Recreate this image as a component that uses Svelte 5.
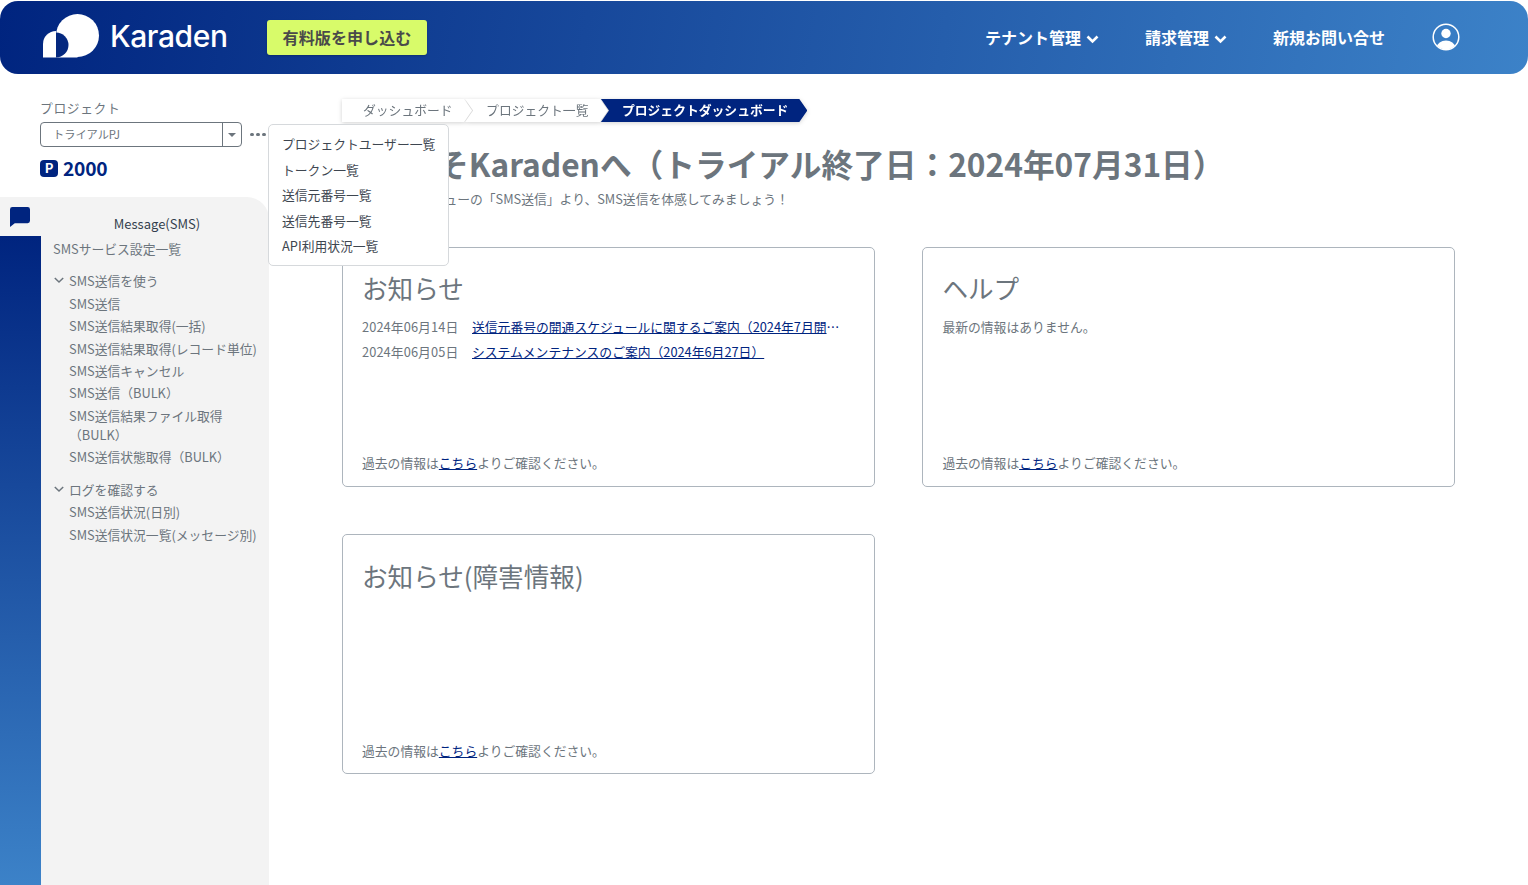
<script>
  const menu = ['プロジェクトユーザー一覧','トークン一覧','送信元番号一覧','送信先番号一覧','API利用状況一覧'];
  const useItems = ['SMS送信','SMS送信結果取得(一括)','SMS送信結果取得(レコード単位)','SMS送信キャンセル','SMS送信（BULK）','SMS送信結果ファイル取得（BULK）','SMS送信状態取得（BULK）'];
  const logItems = ['SMS送信状況(日別)','SMS送信状況一覧(メッセージ別)'];
  const crumbs = ['ダッシュボード','プロジェクト一覧'];
  const news = [
    {d:'2024年06月14日', t:'送信元番号の開通スケジュールに関するご案内（2024年7月開通分のお知らせ）'},
    {d:'2024年06月05日', t:'システムメンテナンスのご案内（2024年6月27日）'}
  ];
</script>

<div class="page">
  <header class="top">
    <div class="logo">
      <svg width="58" height="44" viewBox="0 0 58 44"><circle cx="34.500" cy="21.500" r="21.500" fill="#fff"/><path d="M13 21.500H34.500V43.500H13z" fill="#fff"/><path d="M13 18.500A12.500 12.500 0 0 1 13 43.500z" fill="#04287f"/><path d="M0 43.500V30A13 13 0 0 1 13 17V43.500z" fill="#fff"/></svg>
      <span class="brand">Karaden</span>
    </div>
    <button class="trial"><span>有料版を申し込む</span></button>
    <nav class="nav">
      <span class="nav-item w1">テナント管理<svg class="chev" width="13" height="9" viewBox="0 0 13 9"><path d="M1.500 1.500l5 5 5-5" fill="none" stroke="#fff" stroke-width="2.600"/></svg></span>
      <span class="nav-item w2">請求管理<svg class="chev" width="13" height="9" viewBox="0 0 13 9"><path d="M1.500 1.500l5 5 5-5" fill="none" stroke="#fff" stroke-width="2.600"/></svg></span>
      <span class="nav-item w3">新規お問い合せ</span>
      <svg class="user" width="28" height="28" viewBox="0 0 28 28"><defs><clipPath id="uc"><circle cx="14" cy="14" r="12.500"/></clipPath></defs><circle cx="14" cy="14" r="12.800" fill="none" stroke="#fff" stroke-width="1.500"/><circle cx="14" cy="10.500" r="4.700" fill="#fff"/><ellipse cx="14" cy="24" rx="9" ry="6.500" fill="#fff" clip-path="url(#uc)"/></svg>
    </nav>
  </header>

  <div class="body">
    <aside class="side">
      <div class="project">
        <div class="proj-label">プロジェクト</div>
        <div class="proj-row">
          <div class="select"><span class="sel-text">トライアルPJ</span><span class="sel-btn"><i></i></span></div>
          <span class="dots"><b></b><b></b><b></b></span>
        </div>
        <div class="points"><span class="p">P</span><span>2000</span></div>
      </div>
      <div class="panel">
        <div class="rail">
          <div class="rail-tab"><svg width="20" height="20" viewBox="0 0 21 21"><path d="M2.500 0h16A2.500 2.500 0 0 1 21 2.500v12a2.500 2.500 0 0 1-2.500 2.500H5L0 21V2.500A2.500 2.500 0 0 1 2.500 0z" fill="#00247f"/></svg></div>
          <div class="rail-fill"></div>
        </div>
        <div class="tree">
          <div class="tree-title">Message(SMS)</div>
          <div class="item top-item">SMSサービス設定一覧</div>
          <div class="group"><svg width="10" height="7" viewBox="0 0 10 7"><path d="M.8 1l4.200 4 4.200-4" fill="none" stroke="#6c757d" stroke-width="1.500"/></svg>SMS送信を使う</div>
          {#each useItems as it}<div class="item sub">{it}</div>{/each}
          <div class="group g2"><svg width="10" height="7" viewBox="0 0 10 7"><path d="M.8 1l4.200 4 4.200-4" fill="none" stroke="#6c757d" stroke-width="1.500"/></svg>ログを確認する</div>
          {#each logItems as it}<div class="item sub">{it}</div>{/each}
        </div>
      </div>
      <div class="popover">
        {#each menu as m}<div class="pop-item">{m}</div>{/each}
      </div>
    </aside>

    <main class="main">
      <div class="crumbs">
        {#each crumbs as c, i}
          <span class="crumb" class:first={i === 0}>{c}</span>
        {/each}
        <span class="crumb active">プロジェクトダッシュボード</span>
      </div>
      <h1>ようこそKaradenへ（トライアル終了日：2024年07月31日）</h1>
      <p class="lead">画面の左側のメニューの「SMS送信」より、SMS送信を体感してみましょう！</p>

      <div class="cards">
        <section class="card">
          <h2>お知らせ</h2>
          <div class="list">
            {#each news as n}
              <div class="row"><span class="date">{n.d}</span><a href="#a">{n.t}</a></div>
            {/each}
          </div>
          <p class="foot">過去の情報は<a href="#b">こちら</a>よりご確認ください。</p>
        </section>
        <section class="card">
          <h2>ヘルプ</h2>
          <div class="list"><div class="empty">最新の情報はありません。</div></div>
          <p class="foot">過去の情報は<a href="#c">こちら</a>よりご確認ください。</p>
        </section>
        <section class="card">
          <h2 class="low">お知らせ(障害情報)</h2>
          <div class="list"></div>
          <p class="foot">過去の情報は<a href="#d">こちら</a>よりご確認ください。</p>
        </section>
      </div>
    </main>
  </div>
</div>

<style>
  :global(body) { margin: 0; background: #fff; overflow: hidden; }
  .page {
    width: 1528px; height: 885px; overflow: hidden;
    font-family: "Noto Sans CJK JP", "Noto Sans", sans-serif;
    color: #6c757d; font-size: 12.800px; padding-top: 1px; box-sizing: border-box;
  }
  .top {
    height: 73px; border-radius: 18px;
    background: linear-gradient(100deg, #00247f 0%, #3c82c8 100%);
    display: flex; align-items: center; padding-left: 43px; box-sizing: border-box;
  }
  .logo { display: flex; align-items: center; width: 224px; margin-bottom: 4px; }
  .brand { font-family: "Inter", sans-serif; font-weight: 500; font-size: 30px; color: #fff; margin-left: 9px; line-height: 1; letter-spacing: -.4px; }
  .trial {
    width: 160px; height: 35px; border: 0; border-radius: 3px; background: #d8fb6a;
    font: 700 16px "Noto Sans CJK JP", sans-serif; color: #4a4a4a; padding: 0 0 2px; letter-spacing: .1px;
    box-shadow: 0 1px 2px rgba(0,0,0,.2);
  }
  .nav { margin-left: auto; display: flex; align-items: center; color: #fff; font-size: 16px; font-weight: 700; padding: 0 68px 2px 0; }
  .nav-item { display: flex; align-items: center; white-space: nowrap; }
  .chev { margin-left: 5px; margin-top: 5px; }
  .w1 { margin-right: 46px; }
  .w2 { margin-right: 46px; }
  .w3 { margin-right: 47px; }
  .user { display: block; margin-top: 1px; }

  .body { display: flex; height: 811px; }
  .side { width: 269px; flex: none; position: relative; display: flex; flex-direction: column; }
  .project { padding: 24px 0 0 40px; height: 123px; box-sizing: border-box; }
  .proj-label { line-height: 19px; letter-spacing: .6px; }
  .proj-row { display: flex; align-items: center; margin-top: 5px; }
  .select {
    width: 202px; height: 25px; box-sizing: border-box; border: 1px solid #6c757d; border-radius: 4px;
    display: flex; font-size: 11.200px; line-height: 23px;
  }
  .sel-text { flex: 1; padding-left: 12px; }
  .sel-btn { width: 18px; border-left: 1px solid #6c757d; display: flex; align-items: center; justify-content: center; }
  .sel-btn i { border: 4px solid transparent; border-top: 4px solid #6c757d; border-bottom: 0; }
  .dots { display: flex; gap: 2.500px; margin-left: 8px; }
  .dots b { width: 3.500px; height: 3.500px; border-radius: 50%; background: #6c757d; }
  .points { display: flex; align-items: center; gap: 5px; margin-top: 8px; color: #00247f; font-size: 19.200px; font-weight: 700; line-height: 27px; letter-spacing: -.2px; }
  .p { width: 18px; height: 17px; border-radius: 4px; background: #00247f; color: #fff; font-size: 13px; font-weight: 700; line-height: 16px; text-align: center; letter-spacing: 0; }

  .panel { flex: 1; display: flex; background: #f3f3f3; border-top-right-radius: 22px; }
  .rail { width: 41px; flex: none; display: flex; flex-direction: column; }
  .rail-tab { height: 39px; box-sizing: border-box; padding: 10px 0 0 10px; }
  .rail-fill { flex: 1; background: linear-gradient(180deg, #00247f 0%, #3c82c8 100%); }
  .tree { flex: 1; padding: 17.400px 5px 0 12px; min-width: 0; }
  .tree-title { text-align: center; color: #333f4d; line-height: 19.200px; padding-right: 3px; font-size: 13px; }
  .item { line-height: 19.200px; }
  .top-item { margin-top: 5.800px; }
  .group { display: flex; align-items: center; gap: 5px; line-height: 19.200px; margin-top: 12.800px; margin-bottom: 3.200px; padding-left: 1px; }
  .g2 { margin-top: 13.300px; }
  .sub { margin: 0 0 3.200px 16px; }

  .popover {
    position: absolute; left: 268px; top: 50px; width: 181px; height: 142px; box-sizing: border-box;
    background: #fff; border: 1px solid #d6d9dc; border-radius: 5px; padding: 6px 0 0 13px; z-index: 3;
  }
  .pop-item { color: #3e4650; line-height: 25.600px; white-space: nowrap; }

  .main { flex: 1; padding: 25px 0 0 73px; min-width: 0; }
  .crumbs { display: flex; height: 23px; filter: drop-shadow(0 1px 2px rgba(0,0,0,.18)); }
  .crumb {
    display: flex; align-items: center; height: 23px; background: #fff; white-space: nowrap; box-sizing: border-box;
    padding: 0 19.500px 2px 21px; margin-right: -7px;
    clip-path: polygon(0 0, calc(100% - 8px) 0, 100% 50%, calc(100% - 8px) 100%, 0 100%, 8px 50%);
  }
  .crumb.first { clip-path: polygon(0 0, calc(100% - 8px) 0, 100% 50%, calc(100% - 8px) 100%, 0 100%); }
  .crumb.active { background: #00247f; color: #fff; font-weight: 700; padding: 0 19px 2px 21px; }
  h1 { margin: 18px 0 0; font-size: 31.700px; line-height: 47px; font-weight: 700; color: #6c757d; white-space: nowrap; }
  .lead { margin: 2px 0 0; line-height: 19.200px; }
  .cards { display: grid; grid-template-columns: 533.400px 533px; gap: 47.300px 47px; margin-top: 38.800px; }
  .card {
    height: 240px; box-sizing: border-box; border: 1px solid #adb5bd; border-radius: 5px;
    padding: 19px 19px 13.500px 19px; display: flex; flex-direction: column;
  }
  h2 { margin: 0; font-size: 25.600px; line-height: 42px; font-weight: 400; color: #6c757d; }
  h2.low { padding-top: 1px; margin-bottom: -1px; }
  .list { flex: 1; margin-top: 5px; }
  .row { display: flex; line-height: 25.200px; }
  .date { width: 110px; flex: none; letter-spacing: .1px; }
  .row a { color: #00247f; overflow: hidden; text-overflow: ellipsis; white-space: nowrap; width: 368px; }
  .empty { line-height: 25.600px; }
  .foot { margin: 0; line-height: 19.200px; }
  .foot a { color: #00247f; }
</style>
